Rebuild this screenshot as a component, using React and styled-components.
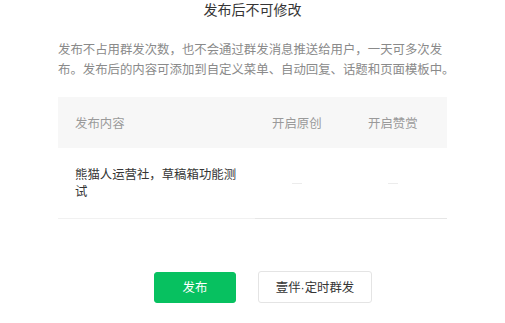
import React from "react";
import styled, { createGlobalStyle } from "styled-components";

const Global = createGlobalStyle`
  html, body { margin: 0; padding: 0; background: #fff; }
  body { font-family: "Noto Sans CJK SC", "Noto Sans", sans-serif; }
`;

const Dialog = styled.div`
  width: 505px;
  height: 323px;
  box-sizing: border-box;
  padding: 0 58px;
  background: #fff;
  display: flex;
  flex-direction: column;
`;

const Title = styled.h3`
  margin: 0;
  font-size: 14px;
  line-height: 18px;
  font-weight: 400;
  color: #353535;
  text-align: center;
`;

const Desc = styled.p`
  margin: 21px -20px 0 0;
  font-size: 12.4px;
  line-height: 20px;
  color: #8a8a8a;
`;

const DescLine = styled.span`
  display: block;
  white-space: nowrap;
`;

const Table = styled.div`
  margin-top: 18px;
  display: grid;
  grid-template-columns: 197px 96px 96px;
`;

const HeadCell = styled.div`
  background: #f7f7f7;
  height: 51px;
  display: flex;
  align-items: center;
  padding-left: 17px;
  font-size: 12.4px;
  color: #9a9a9a;
`;

const Cell = styled.div`
  height: 71px;
  box-sizing: border-box;
  border-bottom: 1px solid ${(p) => p.$line};
  display: flex;
  align-items: center;
  padding: 0 ${(p) => (p.$wide ? "12px" : "0")} 0 17px;
  font-size: 12.4px;
  line-height: 17px;
  color: #353535;
`;

const DashBox = styled.span`
  width: 4em;
  display: flex;
  justify-content: center;
`;

const Dash = styled.span`
  width: 10px;
  height: 1px;
  background: #ececec;
`;

const Actions = styled.div`
  margin-top: 52px;
  display: flex;
  justify-content: center;
  align-items: center;
  gap: 22px;
  padding-left: 21px;
`;

const Button = styled.button`
  box-sizing: border-box;
  height: ${(p) => (p.$primary ? "31px" : "32px")};
  width: ${(p) => (p.$primary ? "82px" : "114px")};
  border-radius: 3px;
  border: 1px solid ${(p) => (p.$primary ? "#07c160" : "#e4e4e4")};
  background: ${(p) => (p.$primary ? "#07c160" : "#fff")};
  color: ${(p) => (p.$primary ? "#fff" : "#353535")};
  font-family: "Liberation Sans", "Noto Sans CJK SC", sans-serif;
  font-size: 12.4px;
  padding: 0;
  cursor: pointer;
`;

export default function App() {
  return (
    <>
      <Global />
      <Dialog>
        <Title>发布后不可修改</Title>
        <Desc>
          <DescLine>发布不占用群发次数，也不会通过群发消息推送给用户，一天可多次发</DescLine>
          <DescLine>布。发布后的内容可添加到自定义菜单、自动回复、话题和页面模板中。</DescLine>
        </Desc>
        <Table>
          <HeadCell>发布内容</HeadCell>
          <HeadCell>开启原创</HeadCell>
          <HeadCell>开启赞赏</HeadCell>
          <Cell $wide $line="#f1f1f1">熊猫人运营社，草稿箱功能测试</Cell>
          <Cell $line="#e6e6e6">
            <DashBox><Dash /></DashBox>
          </Cell>
          <Cell $line="#e6e6e6">
            <DashBox><Dash /></DashBox>
          </Cell>
        </Table>
        <Actions>
          <Button $primary>发布</Button>
          <Button>壹伴·定时群发</Button>
        </Actions>
      </Dialog>
    </>
  );
}
